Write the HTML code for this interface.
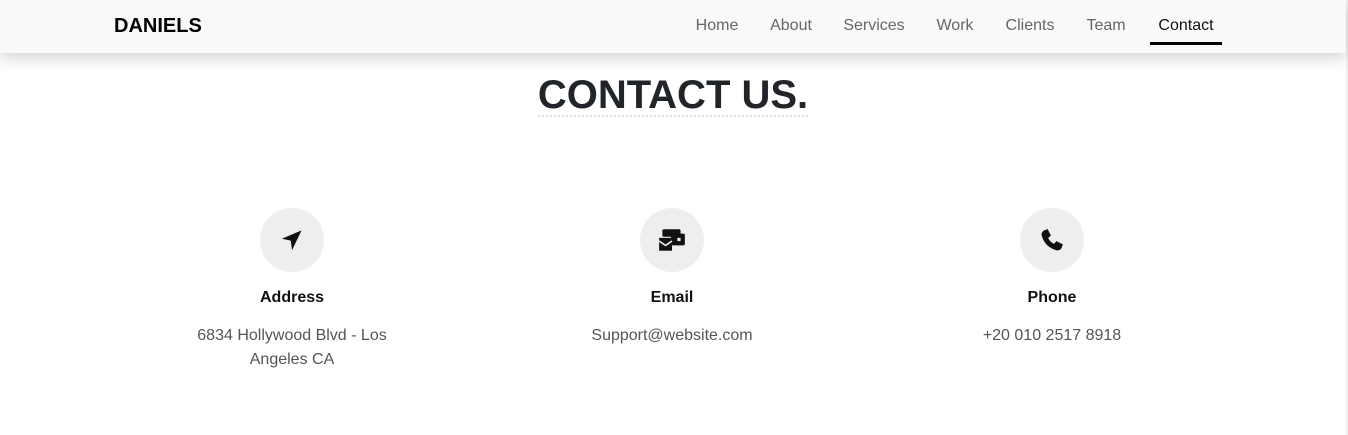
<!DOCTYPE html>
<html><head><style>
*{margin:0;padding:0;box-sizing:border-box}
body{width:1348px;height:435px;overflow:hidden;background:#fff;font-family:"Liberation Sans",Arial,sans-serif;position:relative}
.sb{position:absolute;right:0;top:0;width:2px;height:435px;background:#f0f0f0}
nav{position:absolute;left:0;top:0;width:1346px;height:53px;background:#f8f9fa;box-shadow:0 5px 14px rgba(0,0,0,.18);z-index:2}
.brand{position:absolute;left:114px;top:15px;font-size:20px;font-weight:bold;color:#000}
.nav a{position:absolute;top:17px;font-size:16px;color:#666;text-decoration:none;transform:translateX(-50%);white-space:nowrap}
.nav a.act{color:#111}
.ul{position:absolute;left:1150px;top:42px;width:72px;height:3px;background:#000}
h1{position:absolute;left:0;width:1346px;top:74px;text-align:center;font-size:40px;line-height:42px;font-weight:bold;color:#212529}
h1 span{border-bottom:2px dotted #ddd;display:inline-block;line-height:40px}
.col{position:absolute;top:208px;width:380px;text-align:center}
.c{width:64px;height:64px;border-radius:50%;background:#eee;margin:0 auto;display:flex;align-items:center;justify-content:center}
.t{margin-top:17px;font-size:16px;font-weight:bold;color:#111}
.d{margin-top:17px;font-size:16px;color:#555;line-height:24px}
</style></head><body>
<div class="sb"></div>
<nav><div class="brand">DANIELS</div>
<div class="nav">
<a style="left:717px">Home</a><a style="left:791px">About</a><a style="left:874px">Services</a><a style="left:955px">Work</a><a style="left:1030px">Clients</a><a style="left:1106px">Team</a><a class="act" style="left:1186px">Contact</a>
</div><div class="ul"></div></nav>
<h1><span>CONTACT US.</span></h1>
<div class="col" style="left:102px"><div class="c"><svg width="24" height="24" viewBox="0 0 20 20"><path d="M18 2 L1.5 9 L9 10.5 L10 18.5 Z" fill="#111"/></svg></div><div class="t">Address</div><div class="d">6834 Hollywood Blvd - Los<br>Angeles CA</div></div>
<div class="col" style="left:482px"><div class="c"><svg width="30" height="26" viewBox="0 0 28 24"><rect x="5" y="2" width="17" height="7" rx="1.5" fill="#111"/><rect x="13" y="6" width="13" height="11" rx="1.5" fill="#111"/><rect x="19" y="10" width="3" height="3" fill="#eee"/><rect x="2" y="10" width="12" height="12" fill="#111"/><path d="M2 13 L8 17 L14 13" stroke="#eee" stroke-width="1.5" fill="none"/></svg></div><div class="t">Email</div><div class="d">Support@website.com</div></div>
<div class="col" style="left:862px"><div class="c"><svg width="26" height="26" viewBox="0 0 24 24"><path d="M5 3 L8 2 L11 8 L8.5 10 C9.5 12.5 11.5 14.5 14 15.5 L16 13 L22 16 L21 19 C20 21 18 22 16 21.5 C9 19.5 4.5 15 2.5 8 C2 6 3 4 5 3 Z" fill="#111"/></svg></div><div class="t">Phone</div><div class="d">+20 010 2517 8918</div></div>
</body></html>
